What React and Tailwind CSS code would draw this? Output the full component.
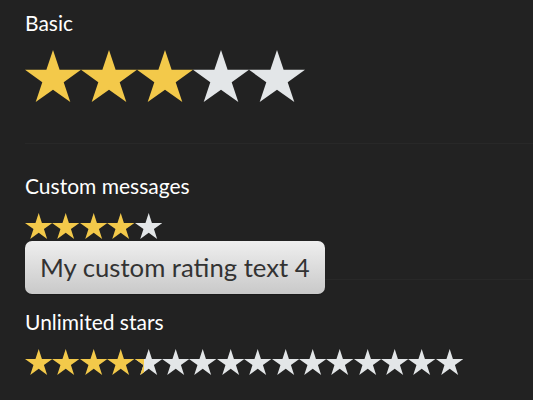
import React from "react";

const STAR_POINTS =
  "50,0 61.8,36.32 100,36.33 69.1,58.78 80.9,95.1 50,72.65 19.1,95.1 30.9,58.78 0,36.33 38.2,36.32";

const YELLOW = "#f3c94a";
const GRAY = "#e3e6e8";

function Star({ w, h, color }) {
  return (
    <svg
      width={w}
      height={h}
      viewBox="0 0 100 95.1"
      preserveAspectRatio="none"
      className="block shrink-0"
    >
      <polygon points={STAR_POINTS} fill={color} />
    </svg>
  );
}

// A star that is filled up to `fraction` of its width
function PartialStar({ w, h, fraction }) {
  return (
    <div className="relative shrink-0" style={{ width: w, height: h }}>
      <Star w={w} h={h} color={GRAY} />
      <div
        className="absolute left-0 top-0 h-full overflow-hidden"
        style={{ width: w * fraction }}
      >
        <Star w={w} h={h} color={YELLOW} />
      </div>
    </div>
  );
}

function Rating({ value, count, w, h }) {
  const stars = [];
  for (let i = 0; i < count; i++) {
    const f = Math.max(0, Math.min(1, value - i));
    if (f >= 1) stars.push(<Star key={i} w={w} h={h} color={YELLOW} />);
    else if (f <= 0) stars.push(<Star key={i} w={w} h={h} color={GRAY} />);
    else stars.push(<PartialStar key={i} w={w} h={h} fraction={f} />);
  }
  return <div className="flex">{stars}</div>;
}

export default function App() {
  return (
    <div
      className="min-h-[400px] w-full overflow-hidden bg-[#222222] pl-[25px] text-white"
      style={{ fontFamily: "Lato, 'Open Sans', sans-serif" }}
    >
      <section className="border-b border-[#282828] pt-[11px] pb-[41px]">
        <h3 className="mb-[15px] text-[21px] leading-[24px] font-normal">Basic</h3>
        <Rating value={3} count={5} w={56} h={52} />
      </section>

      <section className="relative border-b border-[#282828] pt-[30px] pb-[40px]">
        <h3 className="mb-[15px] text-[21px] leading-[24px] font-normal">
          Custom messages
        </h3>
        <div className="relative">
          <Rating value={4} count={5} w={27.4} h={26} />
          <div className="absolute left-0 top-[28px] z-10 flex h-[53px] items-center whitespace-nowrap rounded-[7px] bg-gradient-to-b from-[#efefef] to-[#c9c9c9] px-[15px] text-[25.7px] text-[#333333] shadow-[0_1px_1px_rgba(0,0,0,0.25)]">
            My custom rating text 4
          </div>
        </div>
      </section>

      <section className="pt-[30px]">
        <h3 className="mb-[15px] text-[21px] leading-[24px] font-normal">
          Unlimited stars
        </h3>
        <Rating value={4.36} count={16} w={27.4} h={26} />
      </section>
    </div>
  );
}
